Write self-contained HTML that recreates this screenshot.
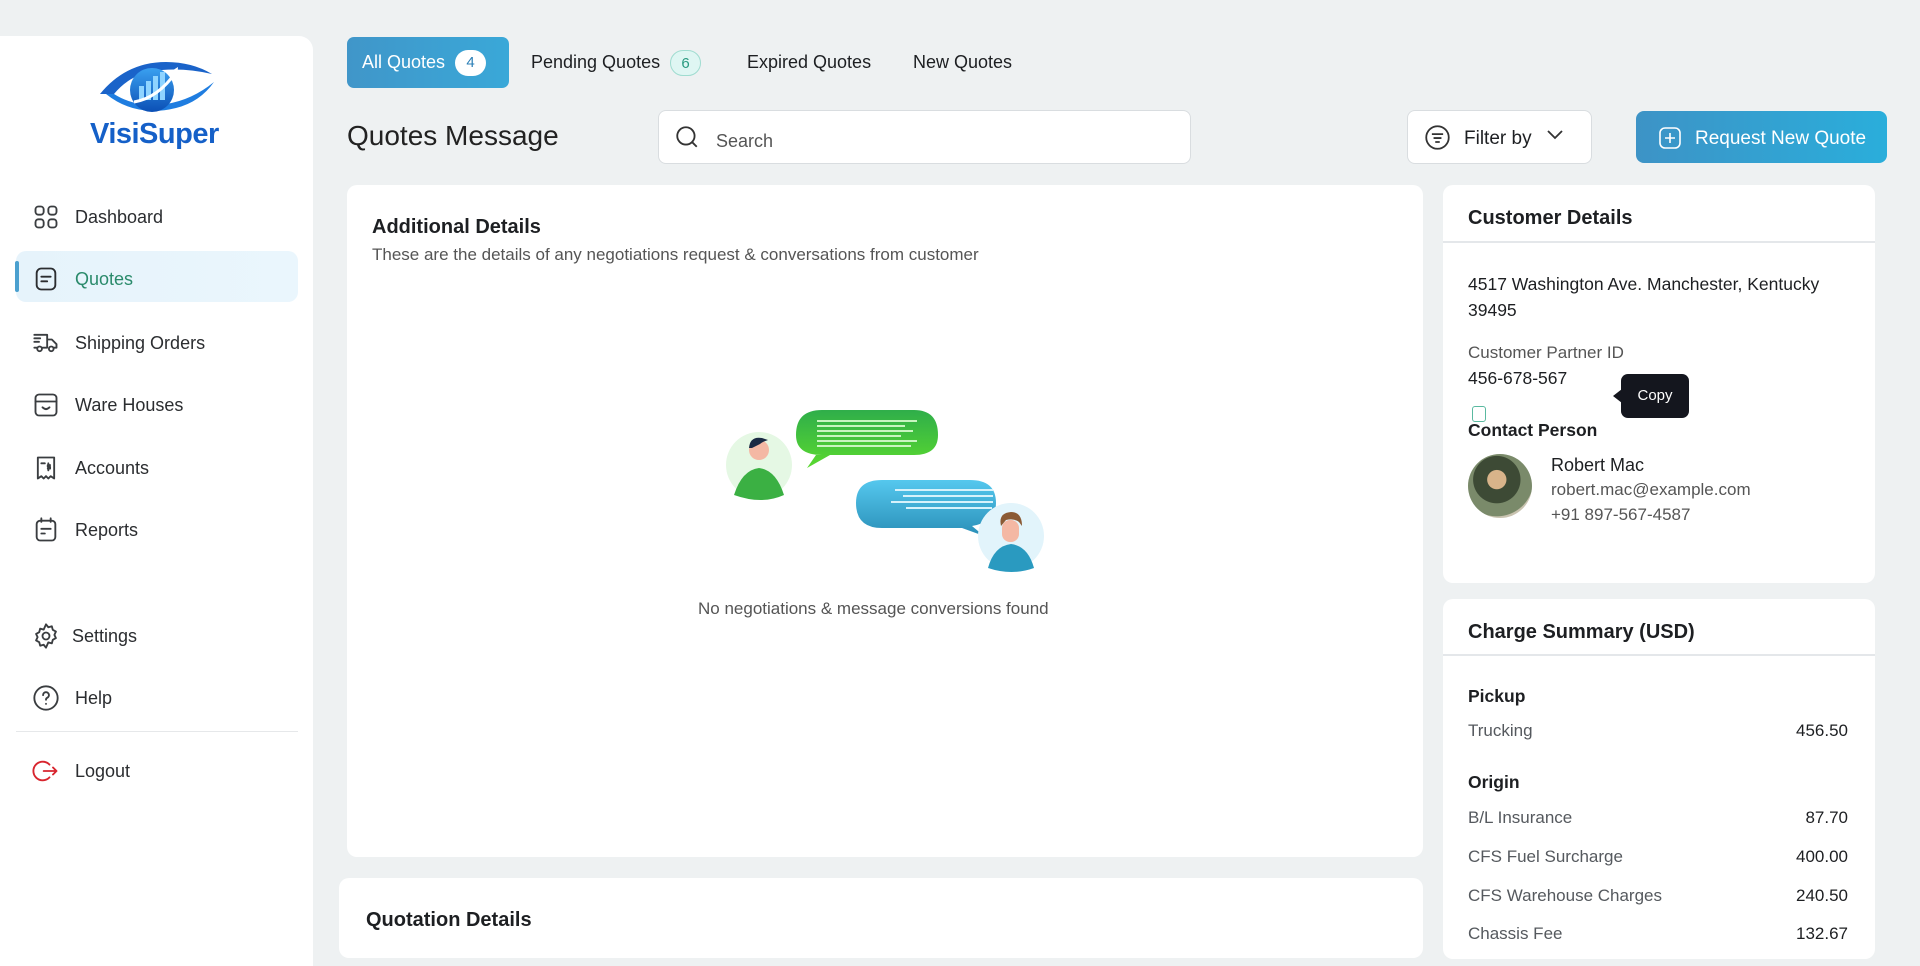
<!DOCTYPE html>
<html><head><meta charset="utf-8"><style>
*{box-sizing:border-box;margin:0;padding:0}
body{width:1920px;height:941px;overflow:hidden;background:#eef1f2;font-family:"Liberation Sans",sans-serif;color:#1d1f22;position:relative}
.abs{position:absolute}
.side{left:0;top:36px;width:313px;height:930px;background:#fff;border-radius:0 14px 0 0}
.nav{position:absolute;left:32px;display:flex;align-items:center;font-size:18px;color:#2b2d30;height:30px}
.nav svg{width:28px;height:28px;margin-right:15px;fill:none;stroke:#3a3d40;stroke-width:1.6;stroke-linecap:round;stroke-linejoin:round}
.card{background:#fff;border-radius:10px;position:absolute}
.tab{position:absolute;top:37px;height:51px;display:flex;align-items:center;font-size:18px;color:#1d1f22}
.badge{display:inline-block;width:31px;height:26px;border-radius:13px;text-align:center;line-height:25px;font-size:15px;margin-left:10px}
.row{position:absolute;left:1468px;width:380px;display:flex;justify-content:space-between;font-size:17px;color:#55595e}
.row b{font-weight:normal;color:#1d1f22}
</style></head><body>
<div class="abs side"></div>
<!-- logo -->
<svg class="abs" style="left:96px;top:58px" width="122" height="66" viewBox="0 0 122 66">
<defs><linearGradient id="lg" x1="0" y1="0" x2="0" y2="1"><stop offset="0" stop-color="#3aa0f0"/><stop offset="1" stop-color="#0b4fb5"/></linearGradient></defs>
<path d="M4 36 Q30 4 70 4 Q96 4 116 16 Q90 10 66 12 Q36 14 18 36 Z" fill="#1a63c9"/>
<path d="M10 36 Q40 60 80 50 Q104 44 118 24 Q96 42 70 46 Q40 50 18 36Z" fill="#1f7de0"/>
<circle cx="56" cy="32" r="22" fill="url(#lg)"/>
<rect x="43" y="28" width="5" height="14" fill="#8fd4ff"/><rect x="50" y="23" width="5" height="19" fill="#8fd4ff"/><rect x="57" y="18" width="5" height="24" fill="#8fd4ff"/><rect x="64" y="14" width="5" height="28" fill="#8fd4ff"/>
<path d="M38 44 Q62 40 80 14" stroke="#fff" stroke-width="3" fill="none"/><path d="M74 14 L82 9 L81 20Z" fill="#fff"/>
</svg>
<div class="abs" style="left:90px;top:118px;font-size:29px;font-weight:bold;color:#1560c8;letter-spacing:-0.5px">VisiSuper</div>

<div class="abs" style="left:16px;top:251px;width:282px;height:51px;border-radius:10px;background:linear-gradient(90deg,#e6f3fb,#eaf6fd)"></div>
<div class="abs" style="left:15px;top:261px;width:4px;height:31px;border-radius:2px;background:#4ba0cf"></div>

<div class="nav" style="top:202px"><svg viewBox="0 0 24 24"><rect x="3" y="3" width="7" height="7" rx="2.5"/><rect x="14" y="3" width="7" height="7" rx="2.5"/><rect x="3" y="14" width="7" height="7" rx="2.5"/><rect x="14" y="14" width="7" height="7" rx="2.5"/></svg>Dashboard</div>
<div class="nav" style="top:264px;color:#2a8a6b"><svg viewBox="0 0 24 24" style="stroke:#2b2d30"><rect x="4" y="3" width="16" height="18" rx="4"/><path d="M8 10h8M8 14h5"/></svg>Quotes</div>
<div class="nav" style="top:328px"><svg viewBox="0 0 24 24"><path d="M2 5h11v11M13 9h4l4 4v3h-2M2 16h2M9 16h4M2 8h5M2 11h4"/><circle cx="6.5" cy="17" r="2"/><circle cx="16.5" cy="17" r="2"/></svg>Shipping Orders</div>
<div class="nav" style="top:390px"><svg viewBox="0 0 24 24"><rect x="3" y="3" width="18" height="18" rx="3"/><path d="M3 9h18M9 14q3 3 6 0"/></svg>Ware Houses</div>
<div class="nav" style="top:453px"><svg viewBox="0 0 24 24"><path d="M5 3h14v18l-3-2-2 2-2-2-2 2-2-2-3 2z"/><path d="M8 8h3M14 8v6M15.5 9.5h-2v1.5h2v1.5h-2"/></svg>Accounts</div>
<div class="nav" style="top:515px"><svg viewBox="0 0 24 24"><rect x="4" y="4" width="16" height="17" rx="3"/><path d="M8 2v3M16 2v3M8 11h8M8 15h3"/></svg>Reports</div>
<div class="nav" style="top:621px"><svg viewBox="0 0 24 24"><circle cx="12" cy="12" r="3"/><path d="M12 2l2 2.5 3-.8.8 3 2.7 1.5-1.3 2.8 1.3 2.8-2.7 1.5-.8 3-3-.8L12 22l-2-2.5-3 .8-.8-3L3.5 15.8 4.8 13 3.5 10.2 6.2 8.7l.8-3 3 .8z"/></svg><span style="margin-left:-3px">Settings</span></div>
<div class="nav" style="top:683px"><svg viewBox="0 0 24 24"><circle cx="12" cy="12" r="10"/><path d="M9.5 9.5a2.5 2.5 0 1 1 3.5 2.3c-.7.4-1 .9-1 1.7M12 17h.01"/></svg>Help</div>
<div class="abs" style="left:16px;top:731px;width:282px;height:1px;background:#e6e8ea"></div>
<div class="nav" style="top:756px"><svg viewBox="0 0 24 24" style="stroke:#d8252e"><path d="M15 6.5A8 8 0 1 0 15 17.5M10 12h11M18 9l3 3-3 3"/></svg>Logout</div>

<!-- tabs -->
<div class="abs" style="left:347px;top:37px;width:162px;height:51px;border-radius:7px;background:linear-gradient(90deg,#4096c9,#3aa8d8)"></div>
<div class="tab" style="left:362px;color:#fff">All Quotes<span class="badge" style="background:#fff;color:#2b7fb7">4</span></div>
<div class="tab" style="left:531px">Pending Quotes<span class="badge" style="background:#dff6f3;color:#2a9a80;border:1px solid #9fdcd0">6</span></div>
<div class="tab" style="left:747px">Expired Quotes</div>
<div class="tab" style="left:913px">New Quotes</div>

<div class="abs" style="left:347px;top:120px;font-size:28px;color:#222">Quotes Message</div>
<div class="abs" style="left:658px;top:110px;width:533px;height:54px;background:#fff;border:1px solid #d9dde0;border-radius:8px"></div>
<svg class="abs" style="left:674px;top:124px" width="26" height="26" viewBox="0 0 24 24" fill="none" stroke="#333" stroke-width="1.7"><circle cx="11" cy="11" r="8"/><path d="M17 17l4 4"/></svg>
<div class="abs" style="left:716px;top:131px;font-size:18px;color:#555">Search</div>
<div class="abs" style="left:1407px;top:110px;width:185px;height:54px;background:#fff;border:1px solid #d9dde0;border-radius:8px"></div>
<svg class="abs" style="left:1424px;top:124px" width="27" height="27" viewBox="0 0 24 24" fill="none" stroke="#333" stroke-width="1.6"><circle cx="12" cy="12" r="10"/><path d="M7 9h10M8.5 12.5h7M10 16h4"/></svg>
<div class="abs" style="left:1464px;top:128px;font-size:19px">Filter by</div>
<svg class="abs" style="left:1545px;top:128px" width="20" height="14" viewBox="0 0 20 14" fill="none" stroke="#333" stroke-width="1.8"><path d="M3 3l7 7 7-7"/></svg>
<div class="abs" style="left:1636px;top:111px;width:251px;height:52px;border-radius:8px;background:linear-gradient(90deg,#3d93c6,#2aaedb)"></div>
<svg class="abs" style="left:1658px;top:126px" width="24" height="24" viewBox="0 0 24 24" fill="none" stroke="#fff" stroke-width="1.6"><rect x="2" y="2" width="20" height="20" rx="5"/><path d="M12 7v10M7 12h10"/></svg>
<div class="abs" style="left:1695px;top:128px;font-size:19px;color:#fff">Request New Quote</div>

<!-- main card -->
<div class="card" style="left:347px;top:185px;width:1076px;height:672px"></div>
<div class="abs" style="left:372px;top:216px;font-size:20px;font-weight:bold">Additional Details</div>
<div class="abs" style="left:372px;top:245px;font-size:17px;color:#555">These are the details of any negotiations request &amp; conversations from customer</div>
<svg class="abs" style="left:722px;top:400px" width="330" height="175" viewBox="0 0 330 175">
<defs><linearGradient id="g1" x1="0" y1="0" x2="0" y2="1"><stop offset="0" stop-color="#2fae4a"/><stop offset="1" stop-color="#5ad92f"/></linearGradient>
<linearGradient id="g2" x1="0" y1="0" x2="0" y2="1"><stop offset="0" stop-color="#55c8ee"/><stop offset="1" stop-color="#2a8fb8"/></linearGradient></defs>
<circle cx="37" cy="65" r="33" fill="#e5f8e4"/>
<path d="M12 95 Q20 70 37 68 Q54 70 62 95 Q40 105 12 95Z" fill="#3bb043"/>
<circle cx="37" cy="50" r="10" fill="#f4b8a4"/><path d="M27 48 Q28 36 40 38 L46 40 Q40 42 38 44 L30 48Z" fill="#1b2a44"/>
<path d="M74 10 H192 Q216 10 216 35 Q216 55 192 55 H108 L85 68 L94 55 H100 Q74 55 74 35 Q74 10 100 10Z" fill="url(#g1)"/>
<g stroke="#c8f5c0" stroke-width="2"><path d="M95 21h100M95 26h88M95 31h96M95 36h84M95 41h100M95 46h94"/></g>
<path d="M160 80 H248 Q274 80 274 103 Q274 122 250 126 L262 136 L240 128 H160 Q134 128 134 103 Q134 80 160 80Z" fill="url(#g2)"/>
<g stroke="#d6f2fb" stroke-width="2"><path d="M173 90h98M181 96h90M169 102h102M184 108h86"/></g>
<circle cx="289" cy="136" r="33" fill="#e2f4fb"/>
<path d="M266 168 Q272 146 289 144 Q306 146 312 168 Q290 176 266 168Z" fill="#2a9ac0"/>
<rect x="280" y="120" width="17" height="22" rx="8" fill="#f4b8a4"/><path d="M279 126 Q276 113 289 112 Q300 112 300 126 L297 122 Q292 118 284 120Z" fill="#8b5a34"/>
</svg>
<div class="abs" style="left:698px;top:599px;font-size:17px;color:#555">No negotiations &amp; message conversions found</div>

<div class="card" style="left:339px;top:878px;width:1084px;height:80px"></div>
<div class="abs" style="left:366px;top:909px;font-size:20px;font-weight:bold">Quotation Details</div>

<!-- customer card -->
<div class="card" style="left:1443px;top:185px;width:432px;height:398px"></div>
<div class="abs" style="left:1468px;top:207px;font-size:20px;font-weight:bold">Customer Details</div>
<div class="abs" style="left:1443px;top:241px;width:432px;height:2px;background:#e4e7ea"></div>
<div class="abs" style="left:1468px;top:271px;font-size:17.5px;line-height:26px;width:400px">4517 Washington Ave. Manchester, Kentucky 39495</div>
<div class="abs" style="left:1468px;top:343px;font-size:17px;color:#555">Customer Partner ID</div>
<div class="abs" style="left:1468px;top:368px;font-size:17.5px">456-678-567</div>
<div class="abs" style="left:1621px;top:374px;width:68px;height:44px;background:#14161e;border-radius:7px;color:#fff;font-size:15px;text-align:center;line-height:44px">Copy</div>
<div class="abs" style="left:1613px;top:389px;width:0;height:0;border-top:7px solid transparent;border-bottom:7px solid transparent;border-right:9px solid #14161e"></div>
<div class="abs" style="left:1472px;top:406px;width:14px;height:16px;border:1.5px solid #5ab9a0;border-radius:3px"></div>
<div class="abs" style="left:1468px;top:420px;font-size:17.5px;font-weight:bold">Contact Person</div>
<div class="abs" style="left:1468px;top:454px;width:64px;height:64px;border-radius:50%;background:radial-gradient(circle at 45% 40%,#d8b48a 0 18%,#3d4a35 19% 45%,#7a8a6a 46% 70%,#c9c3b0 71%)"></div>
<div class="abs" style="left:1551px;top:455px;font-size:18px">Robert Mac</div>
<div class="abs" style="left:1551px;top:480px;font-size:17px;color:#555">robert.mac@example.com</div>
<div class="abs" style="left:1551px;top:505px;font-size:17px;color:#555">+91 897-567-4587</div>

<!-- charge summary -->
<div class="card" style="left:1443px;top:599px;width:432px;height:360px"></div>
<div class="abs" style="left:1468px;top:621px;font-size:20px;font-weight:bold">Charge Summary (USD)</div>
<div class="abs" style="left:1443px;top:654px;width:432px;height:2px;background:#e4e7ea"></div>
<div class="abs" style="left:1468px;top:686px;font-size:17.5px;font-weight:bold">Pickup</div>
<div class="row" style="top:721px">Trucking<b>456.50</b></div>
<div class="abs" style="left:1468px;top:772px;font-size:17.5px;font-weight:bold">Origin</div>
<div class="row" style="top:808px">B/L Insurance<b>87.70</b></div>
<div class="row" style="top:847px">CFS Fuel Surcharge<b>400.00</b></div>
<div class="row" style="top:886px">CFS Warehouse Charges<b>240.50</b></div>
<div class="row" style="top:924px">Chassis Fee<b>132.67</b></div>
</body></html>
